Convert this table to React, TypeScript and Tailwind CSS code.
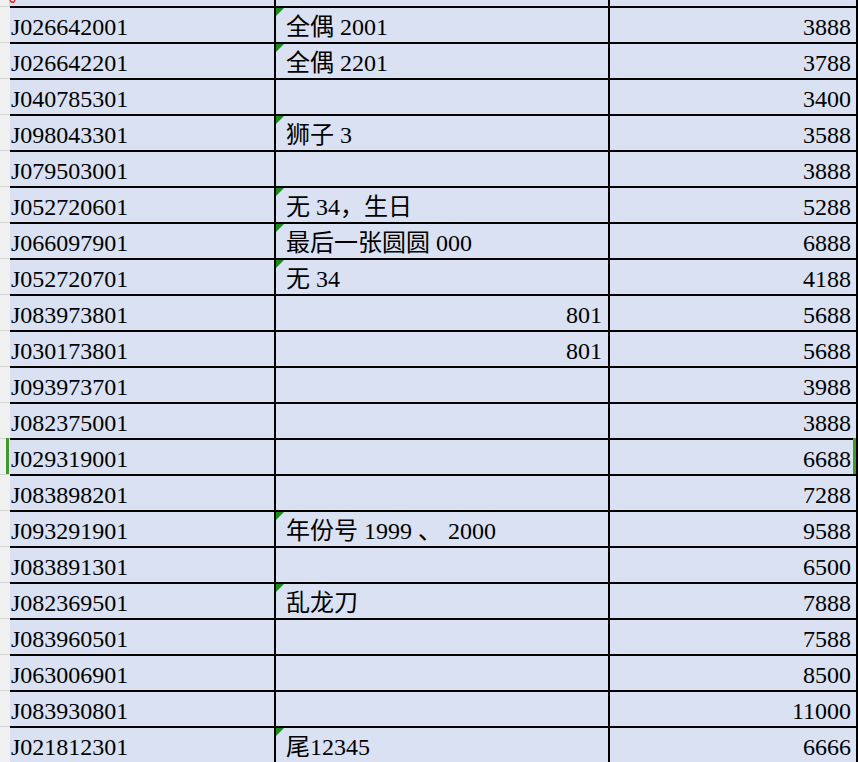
const rows: { id: string; note?: string; noteRight?: boolean; tri?: boolean; price: string }[] = [
    { id: 'J026642001', note: '全偶 2001', tri: true, price: '3888' },
    { id: 'J026642201', note: '全偶 2201', tri: true, price: '3788' },
    { id: 'J040785301', price: '3400' },
    { id: 'J098043301', note: '狮子 3', tri: true, price: '3588' },
    { id: 'J079503001', price: '3888' },
    { id: 'J052720601', note: '无 34，生日', tri: true, price: '5288' },
    { id: 'J066097901', note: '最后一张圆圆 000', tri: true, price: '6888' },
    { id: 'J052720701', note: '无 34', tri: true, price: '4188' },
    { id: 'J083973801', note: '801', noteRight: true, price: '5688' },
    { id: 'J030173801', note: '801', noteRight: true, price: '5688' },
    { id: 'J093973701', price: '3988' },
    { id: 'J082375001', price: '3888' },
    { id: 'J029319001', price: '6688' },
    { id: 'J083898201', price: '7288' },
    { id: 'J093291901', note: '年份号 1999 、 2000', tri: true, price: '9588' },
    { id: 'J083891301', price: '6500' },
    { id: 'J082369501', note: '乱龙刀', tri: true, price: '7888' },
    { id: 'J083960501', price: '7588' },
    { id: 'J063006901', price: '8500' },
    { id: 'J083930801', price: '11000' },
    { id: 'J021812301', note: '尾12345', tri: true, price: '6666' }
]

const SELECTED = 12

// split so that digits after CJK keep the serif latin font
function Note({ text }: { text: string }) {
    const parts = text.split(/([\u3000-\u9fff\uff00-\uffef]+)/).filter(Boolean)
    return (
        <span className="whitespace-pre">
            {parts.map((p, i) =>
                /[\u3000-\u9fff\uff00-\uffef]/.test(p) ? (
                    <span key={i} style={{ fontFamily: '"Noto Sans CJK SC", sans-serif' }}>{p}</span>
                ) : (
                    <span key={i} style={{ fontFamily: '"Liberation Serif", serif' }}>{p}</span>
                )
            )}
        </span>
    )
}

export default function App() {
    return (
        <div
            className="w-[858px] h-[762px] overflow-hidden bg-[#d9e1f2] text-[24px] leading-none text-black"
            style={{ fontFamily: '"Liberation Serif", "Noto Sans CJK SC", serif' }}
        >
            {/* partial row at top */}
            <div className="flex h-[6px]">
                <div className="w-[10px] bg-[#f0f0f0] border-r border-[#d4d4d4] relative">
                    <svg className="absolute left-[9px] top-0" width="8" height="4" viewBox="0 0 8 4">
                        <path d="M1 0 Q2 3 5 2 L6 0" stroke="#e02020" strokeWidth="1.4" fill="none" />
                    </svg>
                </div>
                <div className="w-[264px]" />
                <div className="w-[2px] bg-black" />
                <div className="w-[332px]" />
                <div className="w-[2px] bg-black" />
                <div className="w-[246px]" />
                <div className="w-[2px] bg-black" />
            </div>
            {rows.map((r, i) => (
                <div key={r.id} className="flex h-[36px]">
                    <div className="w-[10px] bg-[#f0f0f0] border-t border-[#d4d4d4] flex justify-start">
                        {i === SELECTED && <div className="ml-[6px] w-[3px] bg-[#3f9a2a] -mt-[1px] h-[37px]" />}
                    </div>
                    <div className="flex-1 flex flex-col">
                        <div className="h-[2px] bg-black" />
                        <div className="flex h-[34px]">
                            <div className="w-[264px] flex items-end pl-[1px] pb-[3px]">{r.id}</div>
                            <div className="w-[2px] bg-black" />
                            <div className={`w-[332px] relative flex items-end pb-[3px] ${r.noteRight ? 'justify-end pr-[6px]' : 'pl-[10px]'}`}>
                                {r.tri && (
                                    <div className="absolute left-0 top-0 w-0 h-0 border-t-[8px] border-t-[#1a8a1a] border-r-[8px] border-r-transparent" />
                                )}
                                {r.note && <Note text={r.note} />}
                            </div>
                            <div className="w-[2px] bg-black" />
                            <div className="w-[246px] flex items-end justify-end pr-[5px] pb-[3px] relative">
                                {r.price}
                                {i === SELECTED && <div className="absolute right-0 -top-[2px] w-[3px] h-[36px] bg-[#3f9a2a]" />}
                            </div>
                            <div className="w-[2px] bg-black" />
                        </div>
                    </div>
                </div>
            ))}
        </div>
    )
}
